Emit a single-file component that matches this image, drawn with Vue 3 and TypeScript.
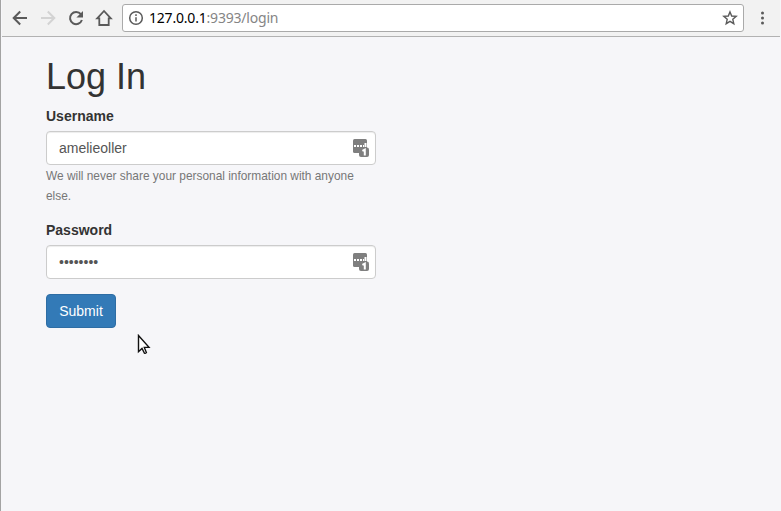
<script setup lang="ts">
import { ref } from 'vue'

const username = ref('amelieoller')
const password = ref('password')
</script>

<template>
  <div class="window">
    <header class="toolbar">
      <nav class="nav">
        <svg class="icon" width="20" height="20" viewBox="0 0 20 20"><path d="M17 10H4.2M10.2 3.5 3.7 10l6.5 6.5" /></svg>
        <svg class="icon disabled" width="20" height="20" viewBox="0 0 20 20"><path d="M3 10h12.8M9.8 3.5l6.5 6.5-6.5 6.5" /></svg>
        <svg class="icon" width="20" height="20" viewBox="0 0 20 20">
          <path d="M14.9 6.2A6.1 6.1 0 1 0 15.9 12" />
          <path class="solid" d="M17 2.9v6.6h-6.6z" />
        </svg>
        <svg class="icon" width="20" height="20" viewBox="0 0 20 20"><path class="house" d="M10 3 3.2 10.3H5.3V17H14.7V10.3H16.8z" /></svg>
      </nav>
      <div class="address">
        <svg class="info" width="16" height="16" viewBox="0 0 16 16">
          <circle cx="8" cy="8" r="6.3" />
          <path d="M8 7.2v4.3M8 4.3v1.7" />
        </svg>
        <div class="url"><span class="host">127.0.0.1</span>:9393/login</div>
        <svg class="star" width="16" height="16" viewBox="0 0 16 16"><path d="M8 1.9 9.7 6l4.5.4-3.4 2.9 1 4.4L8 11.4l-3.8 2.3 1-4.4L1.8 6.4 6.3 6z" /></svg>
      </div>
      <svg class="menu" width="5" height="16" viewBox="0 0 5 16">
        <circle cx="2.5" cy="3" r="1.5" /><circle cx="2.5" cy="8" r="1.5" /><circle cx="2.5" cy="13" r="1.5" />
      </svg>
    </header>
    <main class="page">
      <h1>Log In</h1>
      <form @submit.prevent>
        <div class="group">
          <label for="username">Username</label>
          <div class="field">
            <input id="username" v-model="username" type="text" />
            <svg class="badge" width="17" height="19" viewBox="0 0 17 19">
              <rect width="14" height="14" rx="1.5" />
              <path class="marks" d="M1 7h2M4 7h2M7 7h2M10 7h1M12.5 4v4" />
              <rect x="6" y="8.5" width="10" height="9.5" rx="2" />
              <path class="one" d="M9.4 11.9 11.8 10.6V16.5" />
            </svg>
          </div>
          <small>We will never share your personal information with anyone else.</small>
        </div>
        <div class="group">
          <label for="password">Password</label>
          <div class="field">
            <input id="password" v-model="password" type="password" />
            <svg class="badge" width="17" height="19" viewBox="0 0 17 19">
              <rect width="14" height="14" rx="1.5" />
              <path class="marks" d="M1 7h2M4 7h2M7 7h2M10 7h1M12.5 4v4" />
              <rect x="6" y="8.5" width="10" height="9.5" rx="2" />
              <path class="one" d="M9.4 11.9 11.8 10.6V16.5" />
            </svg>
          </div>
        </div>
        <button type="submit">Submit</button>
      </form>
    </main>
    <svg class="cursor" width="16" height="23" viewBox="0 0 16 23">
      <path d="M3.5 1.5V17.7L7 14.4 9.5 19.2Q10.3 19.8 11.4 18.6L9.3 13.4H14z" />
    </svg>
  </div>
</template>

<style>
body {
  margin: 0;
  overflow: hidden;
}
</style>

<style scoped>
* {
  box-sizing: border-box;
}
.window {
  position: relative;
  height: 511px;
  border-left: 1px solid #a3a3a3;
  background: #f6f6f9;
  color: #333;
  font: 14px/20px "Liberation Sans", Arial, sans-serif;
}
.toolbar {
  display: flex;
  align-items: center;
  height: 37px;
  margin: 0 1px;
  padding: 0 15px 1px 8px;
  background: #f2f2f2;
  border-bottom: 1px solid #b2b2b2;
}
.nav {
  display: flex;
  gap: 8px;
}
.icon {
  fill: none;
  stroke: #5a5a5a;
  stroke-width: 2;
}
.disabled {
  stroke: #d3d3d3;
}
.solid {
  fill: #5a5a5a;
  stroke: none;
}
.house {
  stroke-width: 1.8;
}
.address {
  display: flex;
  flex: 1;
  align-items: center;
  height: 28px;
  margin: 0 16px 0 8px;
  padding: 0 5px;
  border: 1px solid #aaa;
  border-radius: 3px;
  background: #fff;
}
.info {
  fill: none;
  stroke: #5a5a5a;
  stroke-width: 1.5;
}
.url {
  flex: 1;
  margin-left: 5px;
  color: #858585;
  font: 14px/20px "Noto Sans", "Open Sans", sans-serif;
  letter-spacing: -0.2px;
}
.host {
  color: #000;
}
.star {
  fill: none;
  stroke: #5a5a5a;
  stroke-width: 1.4;
}
.menu {
  fill: #5a5a5a;
}
.page {
  width: 375px;
  padding: 20px 0 0 45px;
}
h1 {
  margin: 0 0 10px;
  font-size: 36px;
  font-weight: 400;
  line-height: 39px;
}
.group {
  margin-bottom: 15px;
}
label {
  display: block;
  margin-bottom: 5px;
  font-weight: 700;
}
.field {
  position: relative;
}
input {
  display: block;
  width: 100%;
  height: 34px;
  padding: 6px 12px;
  border: 1px solid #ccc;
  border-radius: 4px;
  outline: none;
  background: #fff;
  box-shadow: inset 0 1px 1px rgba(0, 0, 0, 0.075);
  color: #555;
  font: inherit;
}
.badge {
  position: absolute;
  top: 8px;
  right: 6px;
  fill: #7f7f7f;
}
.marks {
  stroke: #fff;
  stroke-width: 2;
}
.one {
  fill: none;
  stroke: #fff;
  stroke-width: 2;
}
small {
  display: block;
  height: 40px;
  padding-top: 1px;
  color: #777;
  font-size: 11.9px;
}
button {
  display: block;
  width: 70px;
  height: 34px;
  padding: 6px 12px;
  border: 1px solid #2e6da4;
  border-radius: 4px;
  background: #337ab7;
  color: #fff;
  font: inherit;
}
.cursor {
  position: absolute;
  top: 334px;
  left: 134px;
  fill: #fff;
  stroke: #111;
  stroke-width: 1.4;
}
</style>
